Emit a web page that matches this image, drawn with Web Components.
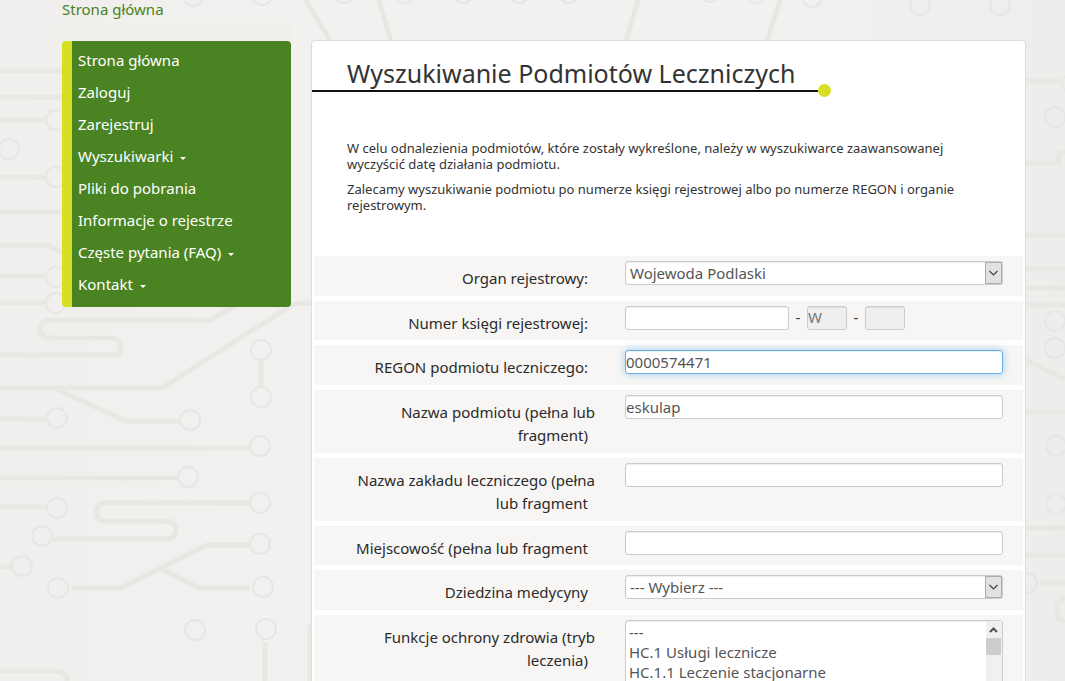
<!DOCTYPE html>
<html lang="pl">
<head>
<meta charset="utf-8">
<title>Wyszukiwanie Podmiotów Leczniczych</title>
<style>
  body { margin: 0; font: 15px/23px "Noto Sans", "Open Sans", sans-serif; color: #333; background: #f1f0ee; }
</style>
</head>
<body>
<rp-page>
  <rp-breadcrumb slot="top"></rp-breadcrumb>
  <rp-nav slot="side"></rp-nav>
  <rp-card slot="main" heading="Wyszukiwanie Podmiotów Leczniczych">
    <p slot="intro">W celu odnalezienia podmiotów, które zostały wykreślone, należy w wyszukiwarce zaawansowanej wyczyścić datę działania podmiotu.</p>
    <p slot="intro">Zalecamy wyszukiwanie podmiotu po numerze księgi rejestrowej albo po numerze REGON i organie rejestrowym.</p>
    <rp-field kind="select" label="Organ rejestrowy:" value="Wojewoda Podlaski"></rp-field>
    <rp-field kind="book" compact label="Numer księgi rejestrowej:"></rp-field>
    <rp-field kind="text" active label="REGON podmiotu leczniczego:" value="0000574471"></rp-field>
    <rp-field kind="text" label="Nazwa podmiotu (pełna lub fragment)" value="eskulap"></rp-field>
    <rp-field kind="text" label="Nazwa zakładu leczniczego (pełna lub fragment" value=""></rp-field>
    <rp-field kind="text" compact label="Miejscowość (pełna lub fragment" value=""></rp-field>
    <rp-field kind="select" label="Dziedzina medycyny" value="--- Wybierz ---"></rp-field>
    <rp-field kind="list" label="Funkcje ochrony zdrowia (tryb leczenia)" value="---|HC.1 Usługi lecznicze|HC.1.1 Leczenie stacjonarne"></rp-field>
  </rp-card>
</rp-page>

<script>
const attach = (el, html) => { el.attachShadow({ mode: "open" }).innerHTML = html; };
const esc = s => (s || "").replace(/&/g, "&amp;").replace(/"/g, "&quot;").replace(/</g, "&lt;");

/* Circuit-board backdrop drawn behind the whole page */
class RpCircuit extends HTMLElement {
  connectedCallback() {
    const rings = [
      [193,-4],[262,-5],[344,-7],[405,-7],[463,-7],[519,-7],[569,-7],[710,-8],[756,-7],[812,-3],[920,5],[1000,5],
      [56,120],[9,149],[56,177],[56,277],[56,303],
      [261,350],[261,397],[57,418],[190,420],[260,446],[188,477],[260,503],[57,508],[42,536],[260,544],[22,566],[58,588],[263,587],[195,630],[266,629],
      [1072,83],[1055,117],[1055,321],[1055,348],[1056,446],[1056,504],[1027,583]
    ].map(([x, y]) => `<circle cx="${x}" cy="${y}" r="10"/>`).join("");
    attach(this, `
      <style>
        :host { display: block; position: absolute; inset: 0; overflow: hidden; z-index: -1;
          background: linear-gradient(90deg, #f0efed 0, #f2f1ef 30%, #f2f1ef 72%, #ededeb 100%); }
        svg { display: block; width: 1065px; height: 681px; }
      </style>
      <svg viewBox="0 0 1065 681" fill="none" aria-hidden="true">
        <g stroke="#e8e7e4" stroke-width="5" stroke-linejoin="round">
          <path d="M0 71H62M0 97H62M0 120H45M0 177H45M0 212H62M0 245H48L62 252M0 276H45M0 303H45"/>
          <path d="M0 355H112Q121 355 121 347T112 338H50Q40 338 40 329T50 320H210L240 303"/>
          <path d="M0 388H162L292 305Q296 303 312 303M58 390L126 421H179M261 361V387"/>
          <path d="M0 419H46M0 448H249M0 478H177M0 507H46M0 567H11"/>
          <path d="M249 503H105Q96 503 96 512T105 521H166Q176 521 176 530T166 539H53"/>
          <path d="M72 588H121L207 545H249M160 568L199 588H250"/>
          <path d="M265 642V681M0 671H55Q67 671 67 681M310 681V632Q310 622 320 622"/>
          <path d="M305 0L331 41M379 0L391 41M638 0L626 41M780 0L767 41"/>
          <path d="M1026 81H1061M1026 163H1059V152H1065M1026 235H1065M1026 269H1065M1026 288H1065M1026 305H1065M1026 360L1065 379M1026 412H1065M1026 528H1065M1026 555H1065M1040 583H1065M1065 597Q1056 601 1057 612T1065 620"/>
        </g>
        <g stroke="#e7e6e4" stroke-width="2">${rings}</g>
      </svg>`);
  }
}
customElements.define("rp-circuit", RpCircuit);

class RpPage extends HTMLElement {
  connectedCallback() {
    attach(this, `
      <style>
        :host { display: block; position: relative; z-index: 0; padding: 0 39px 0 62px; min-height: 100vh; box-sizing: border-box; }
        .columns { display: grid; grid-template-columns: 229fr 715fr; gap: 20px; align-items: start; }
        main, aside { min-width: 0; }
        header { height: 40px; }
      </style>
      <rp-circuit></rp-circuit>
      <header><slot name="top"></slot></header>
      <div class="columns">
        <aside><slot name="side"></slot></aside>
        <main><slot name="main"></slot></main>
      </div>`);
  }
}

class RpBreadcrumb extends HTMLElement {
  connectedCallback() {
    attach(this, `
      <style>
        :host { display: block; }
        a { display: block; line-height: 18px; color: #4a8322; text-decoration: none; }
        .shade { margin-top: 5px; width: 231px; height: 17px; background: #efefec; }
      </style>
      <a href="#">Strona główna</a><div class="shade"></div>`);
  }
}
customElements.define("rp-breadcrumb", RpBreadcrumb);

class RpNav extends HTMLElement {
  connectedCallback() {
    const items = [["Strona główna"], ["Zaloguj"], ["Zarejestruj"], ["Wyszukiwarki", 1], ["Pliki do pobrania"],
      ["Informacje o rejestrze"], ["Częste pytania (FAQ)", 1], ["Kontakt", 1]];
    attach(this, `
      <style>
        :host { display: block; margin-top: 1px; }
        nav { background: #4a8322; border-left: 10px solid #d7df23; border-radius: 4px; padding: 3px 0 7px; }
        ul { list-style: none; margin: 0; padding: 0; }
        a { display: flex; align-items: center; gap: 7px; padding-left: 6px; line-height: 32px; color: #fff; text-decoration: none; }
        .caret { margin-top: 4px; border: 3px solid transparent; border-top-color: #fff; border-bottom: 0; }
      </style>
      <nav><ul>${items.map(([t, c]) => `<li><a href="#">${t}${c ? '<span class="caret"></span>' : ""}</a></li>`).join("")}</ul></nav>`);
  }
}
customElements.define("rp-nav", RpNav);

class RpCard extends HTMLElement {
  connectedCallback() {
    attach(this, `
      <style>
        :host { display: block; background: #fff; border: 1px solid #ddd; border-radius: 4px; padding-bottom: 20px; }
        h1 { margin: 0; padding: 16px 0 1px 35px; font-size: 25px; line-height: 32px; font-weight: 400; color: #333; }
        .rule { position: relative; width: 71%; height: 2px; background: #111; }
        .rule::after { content: ""; position: absolute; right: -13px; top: -6px; width: 13px; height: 13px; border-radius: 50%; background: #d7df23; }
        .intro { display: grid; gap: 9px; padding: 48px 44px 43px 35px; font-size: 13px; line-height: 16px; }
        ::slotted(p) { margin: 0; }
        form { display: grid; gap: 5px; padding: 0 2px; }
      </style>
      <h1>${esc(this.getAttribute("heading"))}</h1>
      <div class="rule"></div>
      <div class="intro"><slot name="intro"></slot></div>
      <form><slot></slot></form>`);
  }
}
customElements.define("rp-card", RpCard);

class RpField extends HTMLElement {
  connectedCallback() {
    const kind = this.getAttribute("kind"), value = this.getAttribute("value") || "";
    const control = {
      text: () => `<input id="c" type="text" value="${esc(value)}">`,
      select: () => `<div class="pick"><select id="c"><option>${esc(value)}</option></select>
        <svg class="arrow" viewBox="0 0 17 22" aria-hidden="true"><rect x=".5" y=".5" width="16" height="21" fill="#e1e1e1" stroke="#adadad"/><path d="M4.5 9L8.5 13L12.500 9" fill="none" stroke="#444" stroke-width="1.2"/></svg></div>`,
      book: () => `<div class="book"><input id="c" type="text"><span>-</span><input class="short" aria-label="Typ księgi" value="W" disabled><span>-</span><input class="short" aria-label="Część księgi" disabled></div>`,
      list: () => `<div class="pick"><select id="c" multiple>${value.split("|").map(v => `<option>${esc(v)}</option>`).join("")}
        <option>HC.1.2 Leczenie dzienne</option><option>HC.1.3 Leczenie ambulatoryjne</option><option>HC.1.4 Leczenie domowe</option><option>HC.2 Usługi rehabilitacyjne</option><option>HC.3 Opieka długoterminowa</option></select>
        <svg class="bar" viewBox="0 0 16 122" aria-hidden="true"><path fill="#f0f0f0" d="M0 0h16v122H0z"/><path fill="#cdcdcd" d="M0 17h15v17H0z"/><path d="M4 11L7.500 7.500L11 11M4 111L7.500 114.500L11 111" fill="none" stroke="#505050" stroke-width="2"/></svg></div>`
    }[kind]();
    attach(this, `
      <style>
        :host { display: block; }
        .row { display: grid; grid-template-columns: 281fr 378fr; column-gap: 30px; padding-right: 20px; background: #f7f6f4; }
        label { padding: 11px 0 6px 25px; text-align: right; color: #2b2b2b; }
        label span { padding-right: 7px; }
        :host([compact]) label { padding-bottom: 5px; }
        .control { padding-top: 5px; min-width: 0; }
        input, select { display: block; box-sizing: border-box; width: 100%; height: 24px; margin: 0; padding: 0 0 1px; border: 1px solid #ccc; border-radius: 3px;
          background: #fff; color: #555; font: inherit; line-height: 20px; box-shadow: inset 0 1px 1px rgba(0,0,0,.075); outline: 0; }
        input:focus { border-color: #66afe9; box-shadow: inset 0 1px 1px rgba(0,0,0,.075), 0 0 8px rgba(102,175,233,.6); }
        input:disabled { background: #eee; color: #777; }
        .pick { position: relative; }
        .pick select { appearance: none; }
        .pick select:not([multiple]) { padding: 0 20px 1px 4px; }
        .pick svg { position: absolute; right: 1px; top: 1px; pointer-events: none; }
        .arrow { width: 17px; height: 22px; }
        .bar { width: 16px; height: 122px; }
        .book { display: flex; }
        .book #c { width: 164px; }
        .book span { width: 18px; text-align: center; line-height: 22px; }
        .book .short { width: 40px; padding-bottom: 2px; }
        select[multiple] { height: 124px; padding: 1px 0; overflow-y: scroll; scrollbar-width: none; }
        select[multiple] option { padding: 0 3px; min-height: 20px; line-height: 20px; }
      </style>
      <div class="row"><label for="c"><span>${esc(this.getAttribute("label"))}</span></label><div class="control">${control}</div></div>`);
    if (this.hasAttribute("active")) {
      const c = this.shadowRoot.getElementById("c");
      c.focus({ preventScroll: true });
      c.setSelectionRange(c.value.length, c.value.length);
    }
  }
}
/* Containers are upgraded first so that the fields are rendered when one takes the focus */
customElements.define("rp-page", RpPage);
customElements.define("rp-field", RpField);
</script>
</body>
</html>
